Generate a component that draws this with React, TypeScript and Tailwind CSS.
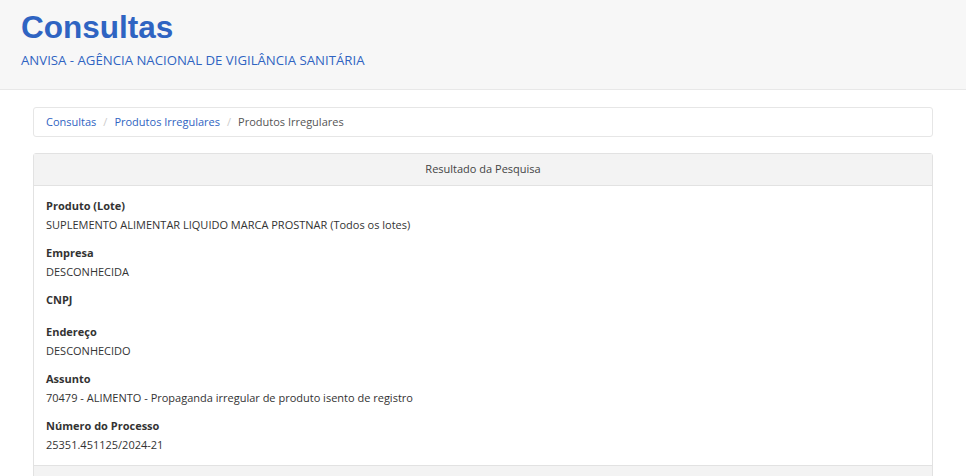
export default function App() {
  const fields: [string, string][] = [
    ["Produto (Lote)", "SUPLEMENTO ALIMENTAR LIQUIDO MARCA PROSTNAR (Todos os lotes)"],
    ["Empresa", "DESCONHECIDA"],
    ["CNPJ", ""],
    ["Endereço", "DESCONHECIDO"],
    ["Assunto", "70479 - ALIMENTO - Propaganda irregular de produto isento de registro"],
    ["Número do Processo", "25351.451125/2024-21"],
  ];
  return (
    <div className="h-[476px] overflow-hidden bg-white text-[11px] text-[#333]" style={{ fontFamily: '"Open Sans", sans-serif' }}>
      <header className="h-[90px] bg-[#f7f7f7] border-b border-[#e8e8e8] px-[21px] pt-[8px]">
        <h1 className="text-[31.5px] font-bold leading-[38px] text-[#2f64c2]" style={{ fontFamily: '"Liberation Sans", Arial, sans-serif' }}>
          Consultas
        </h1>
        <p className="mt-[5px] text-[13.2px] leading-[18px] text-[#2f64c2]">ANVISA - AGÊNCIA NACIONAL DE VIGILÂNCIA SANITÁRIA</p>
      </header>
      <main className="px-[33px] pt-[17px]">
        <nav className="h-[30px] border border-[#e6e6e6] rounded-[3px] flex items-center px-[12px] gap-[7px]">
          <span className="text-[#2f64c2]">Consultas</span>
          <span className="text-[#ccc]">/</span>
          <span className="text-[#2f64c2]">Produtos Irregulares</span>
          <span className="text-[#ccc]">/</span>
          <span className="text-[#555]">Produtos Irregulares</span>
        </nav>
        <section className="mt-[16px] border border-[#e2e2e2] rounded-t-[3px]">
          <div className="h-[32px] bg-[#f3f3f3] border-b border-[#e2e2e2] flex items-center justify-center text-[#444]">
            Resultado da Pesquisa
          </div>
          <div className="px-[12px] pt-[10px] pb-[2px]">
            {fields.map(([label, value]) => (
              <div key={label} className="mb-[9px]">
                <div className="font-bold leading-[19px] text-[#333]">{label}</div>
                {value ? (
                  <div className="leading-[19px] text-[#333]">{value}</div>
                ) : (
                  <div className="h-[4px]" />
                )}
              </div>
            ))}
          </div>
          <div className="h-[30px] bg-[#f3f3f3] border-t border-[#e2e2e2]" />
        </section>
      </main>
    </div>
  );
}
